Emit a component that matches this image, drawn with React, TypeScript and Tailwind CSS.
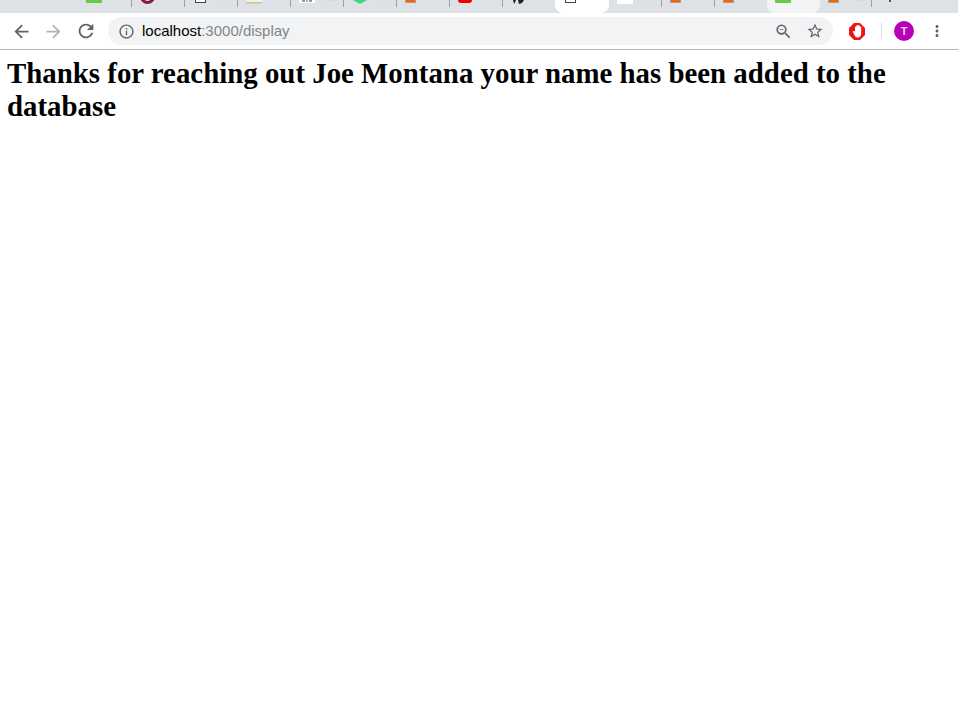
import { MdArrowBack, MdArrowForward, MdInfoOutline, MdMoreVert, MdRefresh, MdStarBorder, MdZoomOut } from 'react-icons/md';

type Tab = {
  kind: string;
  width: string;
  divider?: boolean;
  close?: boolean;
  tone?: string;
};

const tabs: Tab[] = [
  { kind: 'green', width: 'w-[54px]', divider: true },
  { kind: 'ring', width: 'w-[53px]', divider: true },
  { kind: 'page', width: 'w-[53px]', divider: true, close: true },
  { kind: 'tan', width: 'w-[53px]', divider: true },
  { kind: 'white', width: 'w-[53px]', divider: true, close: true },
  { kind: 'gem', width: 'w-[53px]', divider: true, close: true },
  { kind: 'orange', width: 'w-[53px]', divider: true },
  { kind: 'red', width: 'w-[53px]', divider: true },
  { kind: 'github', width: 'w-[52px]' },
  { kind: 'page', width: 'w-[54px]', tone: 'bg-white rounded-b-lg' },
  { kind: 'blank', width: 'w-[53px]', divider: true, close: true },
  { kind: 'orange', width: 'w-[53px]', divider: true },
  { kind: 'orange', width: 'w-[52px]' },
  { kind: 'green', width: 'w-[53px]', tone: 'bg-[#f1f3f4] rounded-b-lg' },
  { kind: 'orange', width: 'w-[52px]', divider: true, close: true },
  { kind: 'dot', width: 'w-[53px]' },
];

function Favicon({ kind }: { kind: string }) {
  switch (kind) {
    case 'green':
      return <div className="h-[3px] w-4 rounded-b-[1px] bg-[#66cc44]" />;
    case 'ring':
      return <div className="-mt-[11px] h-[15px] w-[15px] rounded-full border-[3px] border-[#8a1a3c]" />;
    case 'page':
      return <div className="-mt-[10px] ml-[2px] h-[13px] w-[11px] border border-[#444] bg-white" />;
    case 'tan':
      return (
        <div className="w-4">
          <div className="h-[2px] bg-[#f4f1e8]" />
          <div className="h-px bg-[#c9bfa9]" />
          <div className="h-px bg-[#d9d2c0]" />
        </div>
      );
    case 'white':
      return (
        <div className="flex h-[3px] w-4 items-start justify-center gap-px bg-white">
          <div className="h-[2px] w-[3px] bg-[#999]" />
          <div className="h-[2px] w-[2px] bg-[#aaa]" />
          <div className="h-[2px] w-[3px] bg-[#999]" />
        </div>
      );
    case 'gem':
      return (
        <svg width="16" height="4" viewBox="0 0 16 4" className="block">
          <path d="M1 0h14L9 3.5H7z" fill="#3ddc7a" />
        </svg>
      );
    case 'orange':
      return <div className="h-[3px] w-[11px] border-x border-b border-[#a0a0a0] bg-[#f96400]" />;
    case 'red':
      return <div className="h-[3px] w-[14px] rounded-b-full bg-[#f00000]" />;
    case 'github':
      return (
        <svg width="16" height="4" viewBox="0 0 16 4" className="block">
          <path d="M2 0h3L3.5 3.5H3zM7 0h6l-2 3-3 1z" fill="#222" />
        </svg>
      );
    case 'blank':
      return <div className="h-[4px] w-4 bg-white" />;
    case 'dot':
      return <div className="ml-[9px] h-[2px] w-[2px] bg-[#555]" />;
    default:
      return null;
  }
}

function StopSign() {
  return (
    <svg width="16" height="17" viewBox="0 0 16 17" className="block">
      <path d="M5 0h6l5 5v7l-5 5H5l-5-5V5z" fill="#ee1515" />
      <path
        d="M6 8V4c0-.8 1.200-.8 1.200 0V2.800c0-.8 1.300-.8 1.300 0V2.300c0-.8 1.300-.8 1.300 0v.7c0-.8 1.200-.8 1.200 0v1c0-.7 1.200-.7 1.200 0V10.500c0 2.500-1.300 4-3.500 4-1.500 0-2.500-.8-3.200-2.200L4 9c-.3-.8.8-1.300 1.200-.6z"
        fill="#fff"
      />
    </svg>
  );
}

export default function App() {
  return (
    <div className="min-h-[723px] bg-white font-['Liberation_Serif',serif] text-black">
      <div className="flex h-[13px] items-start overflow-hidden bg-[#dee1e6] pl-[78px]">
        {tabs.map((tab, i) => (
          <div key={i} className={`flex h-[13px] shrink-0 items-start pl-2 ${tab.width} ${tab.tone || ''}`}>
            <div className="flex h-[5px] w-[38px] items-start overflow-hidden">
              <Favicon kind={tab.kind} />
              {tab.close && <div className="ml-auto mr-[3px] h-px w-[7px] bg-[#d6d9dd]" />}
            </div>
            {tab.divider && <div className="ml-auto h-[7px] w-px bg-[#9aa0a6]" />}
          </div>
        ))}
      </div>

      <div className="flex h-[37px] items-center border-b border-[#b4b4b4] bg-white font-['Liberation_Sans',sans-serif]">
        <div className="flex w-[108px] items-center pl-[11px] text-[#5f6368]">
          <MdArrowBack size={21} />
          <MdArrowForward size={21} className="ml-[11px] text-[#b1b3b6]" />
          <MdRefresh size={22} className="ml-[11px]" />
        </div>
        <div className="flex h-[28px] w-[725px] items-center rounded-full bg-[#f1f3f4] pl-[10px] pr-[9px]">
          <MdInfoOutline size={17} className="text-[#5f6368]" />
          <div className="ml-[7px] text-[15px] text-[#000]">
            localhost<span className="text-[#80868b]">:3000/display</span>
          </div>
          <MdZoomOut size={19} className="ml-auto text-[#5f6368]" />
          <MdStarBorder size={18} className="ml-[13px] text-[#5f6368]" />
        </div>
        <div className="flex flex-1 items-center pl-4">
          <StopSign />
          <div className="ml-4 h-4 w-px bg-[#dadce0]" />
          <div className="ml-3 flex h-5 w-5 items-center justify-center rounded-full bg-[#b800b8] text-[11px] font-bold text-[#f3d0f3]">
            T
          </div>
          <MdMoreVert size={18} className="ml-[14px] text-[#5f6368]" />
        </div>
      </div>

      <h1 className="pl-[7px] pr-2 pt-[7px] text-[28.87px] font-bold leading-[33px]">
        Thanks for reaching out Joe Montana your name has been added to the database
      </h1>
    </div>
  );
}
